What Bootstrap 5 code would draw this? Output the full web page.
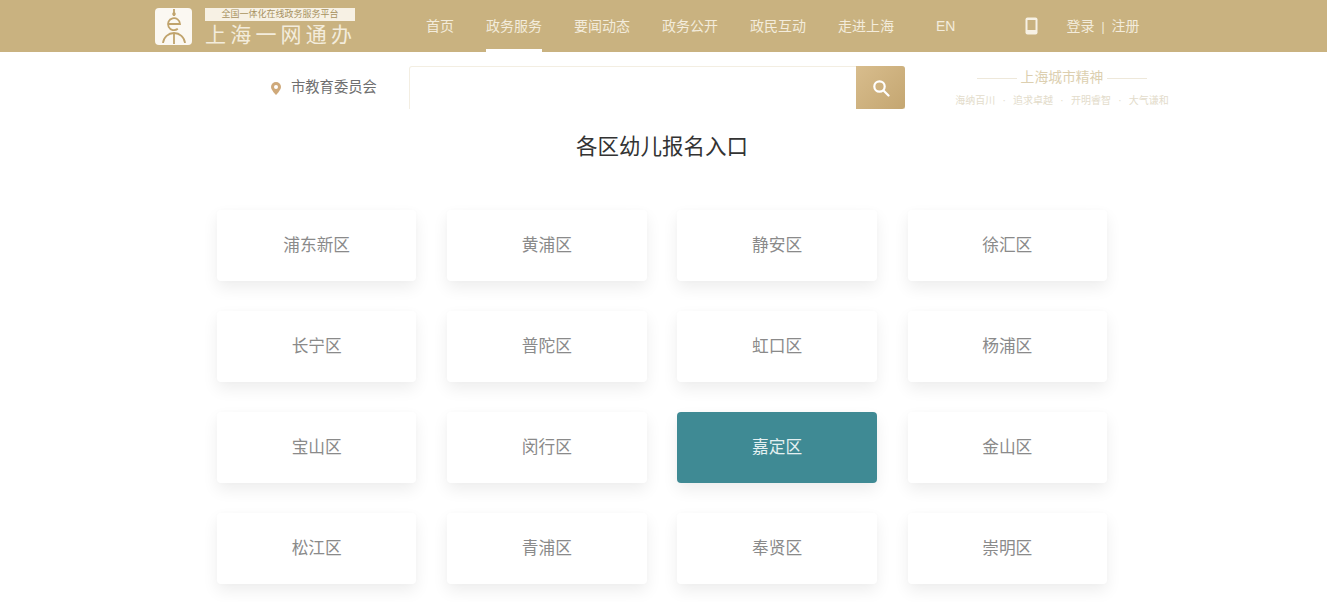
<!DOCTYPE html>
<html lang="zh-CN">
<head>
    <meta charset="UTF-8">
    <meta name="viewport" content="width=device-width, initial-scale=1.0">
    <title>各区幼儿报名入口</title>
    <link href="https://cdn.jsdelivr.net/npm/bootstrap@5.3.0/dist/css/bootstrap.min.css" rel="stylesheet">
    <style>
        html, body {
            height: 602px;
            overflow: hidden;
        }
        body {
            font-family: "Liberation Sans", "Noto Sans CJK SC", sans-serif;
            background: #fff;
            color: #333;
        }
        .top-bar {
            height: 52px;
            background: #c9b280;
            padding-left: 155px;
            color: #f7f1e4;
            font-size: 14px;
        }
        .logo-box {
            width: 37px;
            height: 37px;
            background: #fbf8f2;
            border-radius: 4px;
            margin-right: 13px;
        }
        .logo-text {
            width: 150px;
            margin-top: 2px;
            margin-right: 71px;
        }
        .logo-small {
            background: #f7f1e4;
            color: #a8925f;
            font-size: 9px;
            line-height: 13px;
            height: 13px;
            width: 150px;
            text-align: center;
            white-space: nowrap;
            margin-bottom: 2px;
        }
        .logo-big {
            font-size: 21px;
            line-height: 23px;
            letter-spacing: 4.2px;
            white-space: nowrap;
            color: #f3ecdc;
        }
        .top-link {
            color: #f3ecdc;
            text-decoration: none;
            height: 52px;
            line-height: 52px;
            margin-right: 32px;
            white-space: nowrap;
            position: relative;
        }
        .top-link.current::after {
            content: "";
            position: absolute;
            left: 0;
            right: 0;
            bottom: 0;
            height: 3px;
            background: #fff;
        }
        .top-link.lang {
            margin-left: 10px;
            margin-right: 70px;
        }
        .phone-icon {
            margin-right: 28px;
        }
        .user-links {
            white-space: nowrap;
            color: #f3ecdc;
        }
        .user-links a {
            margin-right: 0;
        }
        .user-links span {
            margin: 0 7px;
            font-size: 12px;
        }
        .search-row {
            height: 58px;
            padding-left: 271px;
        }
        .place {
            width: 138px;
            height: 44px;
            margin-top: 14px;
            font-size: 14.3px;
            color: #6f6f6f;
        }
        .place svg {
            margin-right: 10px;
        }
        .search-box {
            width: 496px;
            height: 43px;
            margin-top: 14px;
            border: 1px solid #f3eee2;
            border-bottom: 0;
            border-radius: 3px 3px 0 0;
            margin-right: 50px;
        }
        .search-btn {
            width: 49px;
            height: 43px;
            margin-top: -1px;
            margin-right: -1px;
            background: linear-gradient(135deg, #d8bd8d, #c4a671);
            border-radius: 0 3px 3px 0;
        }
        .city-slogan {
            width: 214px;
            margin-top: 16px;
            text-align: center;
        }
        .city-title {
            color: #dccfb0;
            font-size: 13.8px;
            line-height: 20px;
            white-space: nowrap;
        }
        .city-title span {
            display: inline-block;
            width: 40px;
            height: 1px;
            background: #eee8da;
            vertical-align: middle;
            margin: 0 4px;
        }
        .city-sub {
            color: #e3dccb;
            font-size: 10px;
            line-height: 14px;
            margin-top: 6px;
            white-space: nowrap;
            word-spacing: 4.5px;
        }
        .page-title {
            font-size: 21.5px;
            font-weight: 400;
            line-height: 30px;
            margin: 22px 0 48px;
            padding-right: 3px;
            text-align: center;
            color: #333;
        }
        .area-grid {
            display: grid;
            grid-template-columns: repeat(4, 199.4px);
            grid-auto-rows: 70.5px;
            column-gap: 30.8px;
            row-gap: 30.5px;
            padding-left: 217px;
        }
        .area-item {
            display: flex;
            align-items: center;
            justify-content: center;
            background: #fff;
            color: #8a8a8a;
            font-size: 16.7px;
            text-decoration: none;
            border-radius: 4px;
            box-shadow: 0 7px 16px rgba(0, 0, 0, .07), 0 0 5px rgba(0, 0, 0, .015);
        }
        .area-item.chosen {
            background: #3f8a94;
            color: #e3f0f1;
        }
    </style>
</head>
<body>
    <header class="top-bar d-flex align-items-center">
        <div class="logo-box d-flex align-items-center justify-content-center">
            <svg width="26" height="35" viewBox="0 0 26 35" fill="none" stroke="#c0a36c" stroke-width="1.8">
                <path d="M13 0v7" />
                <circle cx="13" cy="5" r="1.8" fill="#c0a36c" stroke="none" />
                <path d="M7 15h12a6 6 0 1 0-2.2 4.8" />
                <path d="M2 34a11 11 0 0 1 11-10 11 11 0 0 1 11 10M13 24v11" />
            </svg>
        </div>
        <div class="logo-text">
            <div class="logo-small">全国一体化在线政务服务平台</div>
            <div class="logo-big">上海一网通办</div>
        </div>
        <nav class="d-flex align-items-center">
            <a class="top-link" href="#">首页</a>
            <a class="top-link current" href="#">政务服务</a>
            <a class="top-link" href="#">要闻动态</a>
            <a class="top-link" href="#">政务公开</a>
            <a class="top-link" href="#">政民互动</a>
            <a class="top-link" href="#">走进上海</a>
            <a class="top-link lang" href="#">EN</a>
        </nav>
        <svg class="phone-icon" width="13" height="18" viewBox="0 0 13 18">
            <rect x="0.5" y="0.5" width="12" height="17" rx="2" fill="#f7f1e4" />
            <rect x="2.5" y="3" width="8" height="10" fill="#c9b280" />
        </svg>
        <div class="user-links"><a class="top-link" href="#">登录</a><span>|</span><a class="top-link" href="#">注册</a></div>
    </header>

    <div class="search-row d-flex">
        <div class="place d-flex align-items-center">
            <svg width="10" height="13" viewBox="0 0 10 13">
                <path d="M5 0a5 5 0 0 1 5 5c0 3-5 8-5 8S0 8 0 5a5 5 0 0 1 5-5z" fill="#cfa97a" />
                <circle cx="5" cy="5" r="2" fill="#fff" />
            </svg>
            市教育委员会
        </div>
        <div class="search-box d-flex justify-content-end">
            <div class="search-btn d-flex align-items-center justify-content-center">
                <svg width="18" height="18" viewBox="0 0 18 18" fill="none" stroke="#fff" stroke-width="2.2">
                    <circle cx="7.5" cy="7.5" r="5.2" />
                    <path d="M11.5 11.5l5 5" stroke-linecap="round" />
                </svg>
            </div>
        </div>
        <div class="city-slogan">
            <div class="city-title"><span></span>上海城市精神<span></span></div>
            <div class="city-sub">海纳百川 · 追求卓越 · 开明睿智 · 大气谦和</div>
        </div>
    </div>

    <h1 class="page-title">各区幼儿报名入口</h1>

    <div class="area-grid" id="areas"></div>

    <script src="https://cdn.jsdelivr.net/npm/bootstrap@5.3.0/dist/js/bootstrap.bundle.min.js"></script>
    <script>
        const areas = ["浦东新区", "黄浦区", "静安区", "徐汇区", "长宁区", "普陀区", "虹口区", "杨浦区",
            "宝山区", "闵行区", "嘉定区", "金山区", "松江区", "青浦区", "奉贤区", "崇明区"];
        const box = document.getElementById('areas');
        areas.forEach(name => {
            const a = document.createElement('a');
            a.href = '#';
            a.className = 'area-item' + (name === '嘉定区' ? ' chosen' : '');
            a.textContent = name;
            box.appendChild(a);
        });
    </script>
</body>
</html>
